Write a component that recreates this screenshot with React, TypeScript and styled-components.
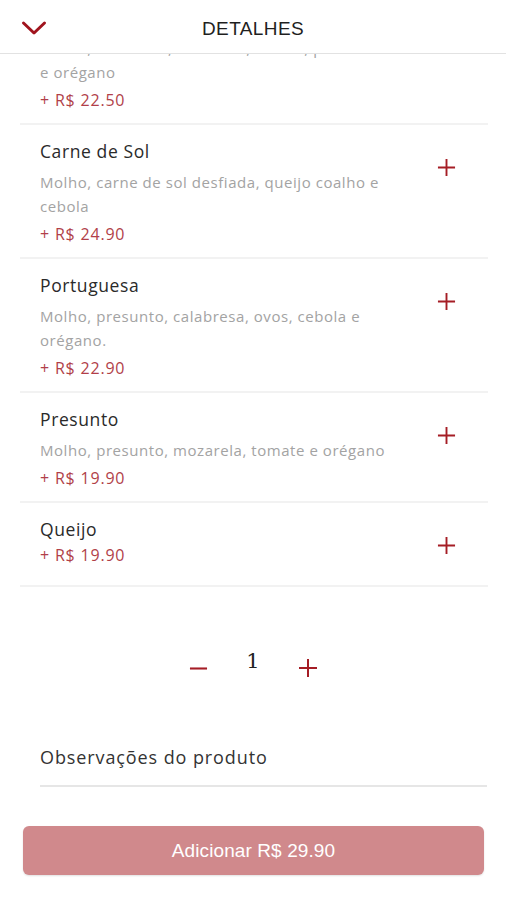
import React from "react";
import styled, { createGlobalStyle } from "styled-components";

const GlobalStyle = createGlobalStyle`
  html, body { margin: 0; padding: 0; background: #fff; }
  body { font-family: "Open Sans", "Noto Sans", sans-serif; color: #2b2b2b; }
  * { box-sizing: border-box; }
`;

const Screen = styled.div`
  width: 506px;
  height: 900px;
  display: flex;
  flex-direction: column;
  background: #fff;
  overflow: hidden;
`;

const Header = styled.header`
  position: relative;
  height: 54px;
  flex: none;
  display: flex;
  align-items: center;
  justify-content: center;
  padding-top: 4px;
  border-bottom: 1.5px solid #e2e2e2;
  background: #fff;
  z-index: 2;
`;

const BackButton = styled.button`
  position: absolute;
  left: 20px;
  top: 19px;
  width: 28px;
  height: 18px;
  border: none;
  background: none;
  padding: 0;
  display: flex;
  align-items: center;
  justify-content: center;
`;

const Title = styled.h1`
  margin: 0;
  font-family: "Liberation Sans", Arial, sans-serif;
  font-size: 19px;
  font-weight: 400;
  letter-spacing: 0.4px;
  color: #1f1f1f;
`;

const Scroll = styled.div`
  flex: 1;
  overflow: hidden;
  display: flex;
  flex-direction: column;
`;

const List = styled.div`
  margin: -63px 18px 0 20px;
  display: flex;
  flex-direction: column;
`;

const Row = styled.div`
  display: flex;
  align-items: flex-start;
  justify-content: space-between;
  padding: 14px 0 11px 20px;
  border-bottom: 2px solid #f2f2f2;
`;

const Info = styled.div`
  display: flex;
  flex-direction: column;
  max-width: 352px;
`;

const Name = styled.div`
  font-size: 17.5px;
  line-height: 24px;
  letter-spacing: 0.6px;
  color: #2a2a2a;
`;

const Desc = styled.div`
  margin-top: 7px;
  font-size: 15px;
  line-height: 24px;
  letter-spacing: 0.55px;
  color: #a3a3a3;
  white-space: pre-line;
`;

const Price = styled.div<{ $tight?: boolean }>`
  margin-top: ${(p) => (p.$tight ? "2px" : "4px")};
  font-size: 16px;
  line-height: 24px;
  letter-spacing: 0.8px;
  color: #b13f49;
`;

const AddButton = styled.button`
  flex: none;
  width: 56px;
  height: 57px;
  margin-right: 14px;
  border: none;
  background: none;
  padding: 0;
  display: flex;
  align-items: center;
  justify-content: center;
`;

const Quantity = styled.div`
  margin-top: 53px;
  display: flex;
  align-items: center;
  justify-content: center;
  gap: 34px;
  height: 56px;
`;

const QtyButton = styled.button`
  border: none;
  background: none;
  padding: 0;
  width: 22px;
  height: 22px;
  display: flex;
  align-items: center;
  justify-content: center;
`;

const QtyValue = styled.span`
  font-family: "DejaVu Serif", serif;
  font-size: 21px;
  color: #222;
  margin-top: -14px;
  width: 20px;
  text-align: center;
`;

const Notes = styled.div`
  margin: 49px 19px 0 40px;
  padding-bottom: 16px;
  border-bottom: 2px solid #e6e6e6;
  font-size: 18px;
  line-height: 24px;
  letter-spacing: 0.9px;
  color: #333;
`;

const Footer = styled.div`
  padding: 39px 22px 0 23px;
`;

const SubmitButton = styled.button`
  width: 100%;
  height: 49px;
  border: none;
  border-radius: 6px;
  background: #d0898c;
  color: #fff;
  font-family: "Liberation Sans", Arial, sans-serif;
  font-size: 19px;
  letter-spacing: 0.1px;
  box-shadow: 0 1px 2px rgba(0, 0, 0, 0.12);
`;

const Plus = ({ size = 19 }: { size?: number }) => (
  <svg width={size} height={size} viewBox="0 0 20 20">
    <path d="M10 1v18M1 10h18" stroke="#a51d25" strokeWidth="2" fill="none" />
  </svg>
);

const Minus = () => (
  <svg width="19" height="19" viewBox="0 0 20 20">
    <path d="M1 10h18" stroke="#a51d25" strokeWidth="2.2" fill="none" />
  </svg>
);

type Item = { name: string; desc?: string; price: string };

const items: Item[] = [
  {
    name: "Calabresa",
    desc: "Molho, calabresa, mozarela, cebola, pimentão\ne orégano",
    price: "+ R$ 22.50",
  },
  {
    name: "Carne de Sol",
    desc: "Molho, carne de sol desfiada, queijo coalho e cebola",
    price: "+ R$ 24.90",
  },
  {
    name: "Portuguesa",
    desc: "Molho, presunto, calabresa, ovos, cebola e orégano.",
    price: "+ R$ 22.90",
  },
  {
    name: "Presunto",
    desc: "Molho, presunto, mozarela, tomate e orégano",
    price: "+ R$ 19.90",
  },
  { name: "Queijo", price: "+ R$ 19.90" },
];

export default function App() {
  return (
    <>
      <GlobalStyle />
      <Screen>
        <Header>
          <BackButton aria-label="Voltar">
            <svg width="26" height="16" viewBox="0 0 26 16">
              <path
                d="M2.5 3l10.5 10L23.5 3"
                stroke="#a0141d"
                strokeWidth="3"
                fill="none"
                strokeLinecap="round"
                strokeLinejoin="round"
              />
            </svg>
          </BackButton>
          <Title>DETALHES</Title>
        </Header>
        <Scroll>
          <List>
            {items.map((it) => (
              <Row key={it.name}>
                <Info>
                  <Name>{it.name}</Name>
                  {it.desc && <Desc>{it.desc}</Desc>}
                  <Price $tight={!it.desc}>{it.price}</Price>
                </Info>
                <AddButton aria-label="Adicionar">
                  <Plus />
                </AddButton>
              </Row>
            ))}
          </List>
          <Quantity>
            <QtyButton aria-label="Diminuir">
              <Minus />
            </QtyButton>
            <QtyValue>1</QtyValue>
            <QtyButton aria-label="Aumentar">
              <Plus size={20} />
            </QtyButton>
          </Quantity>
          <Notes>Observações do produto</Notes>
          <Footer>
            <SubmitButton>Adicionar R$ 29.90</SubmitButton>
          </Footer>
        </Scroll>
      </Screen>
    </>
  );
}
